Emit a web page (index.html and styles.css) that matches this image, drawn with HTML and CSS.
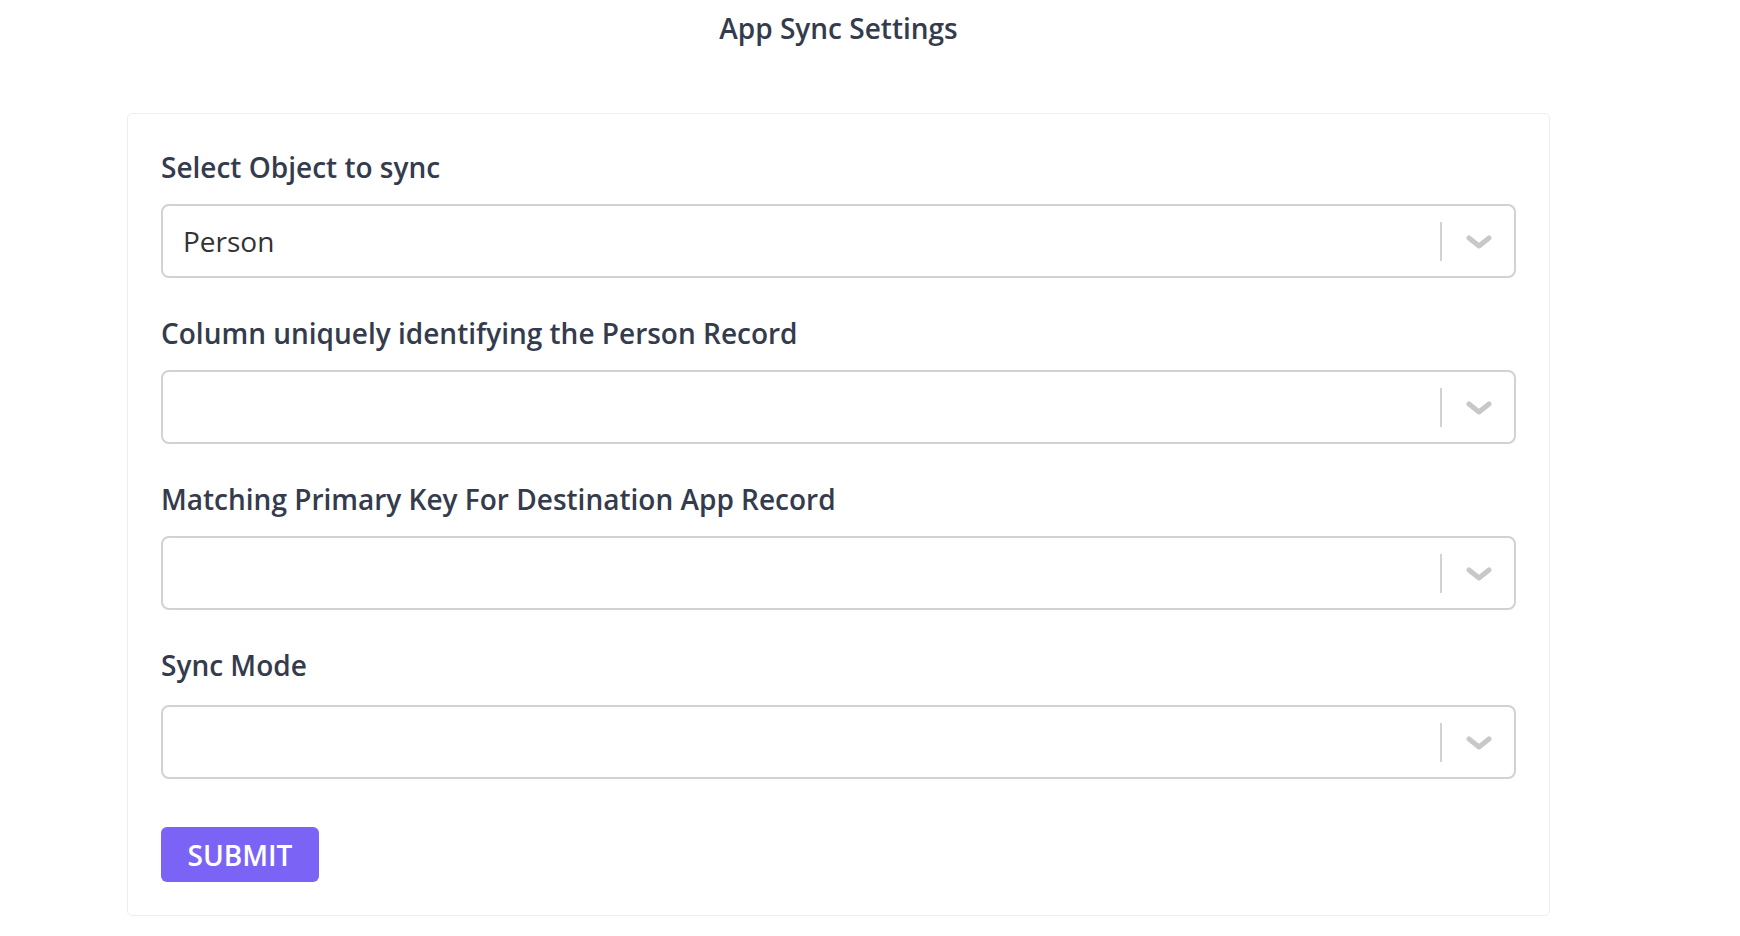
FILE: index.html
```html
<!DOCTYPE html>
<html lang="en">
<head>
<meta charset="utf-8">
<title>App Sync Settings</title>
<link rel="stylesheet" href="styles.css">
</head>
<body>
<div class="page">
  <h1 class="title">App Sync Settings</h1>
  <form class="card">
    <div class="field">
      <label class="label">Select Object to sync</label>
      <div class="select">
        <div class="value">Person</div>
        <div class="indicators">
          <span class="sep"></span>
          <span class="chev"><svg viewBox="0 0 26 14" width="26" height="14"><polyline points="3,3 13,11 23,3" fill="none" stroke="currentColor" stroke-width="5" stroke-linecap="round" stroke-linejoin="round"/></svg></span>
        </div>
      </div>
    </div>
    <div class="field">
      <label class="label">Column uniquely identifying the Person Record</label>
      <div class="select">
        <div class="value"></div>
        <div class="indicators">
          <span class="sep"></span>
          <span class="chev"><svg viewBox="0 0 26 14" width="26" height="14"><polyline points="3,3 13,11 23,3" fill="none" stroke="currentColor" stroke-width="5" stroke-linecap="round" stroke-linejoin="round"/></svg></span>
        </div>
      </div>
    </div>
    <div class="field">
      <label class="label">Matching Primary Key For Destination App Record</label>
      <div class="select">
        <div class="value"></div>
        <div class="indicators">
          <span class="sep"></span>
          <span class="chev"><svg viewBox="0 0 26 14" width="26" height="14"><polyline points="3,3 13,11 23,3" fill="none" stroke="currentColor" stroke-width="5" stroke-linecap="round" stroke-linejoin="round"/></svg></span>
        </div>
      </div>
    </div>
    <div class="field field-last">
      <label class="label">Sync Mode</label>
      <div class="select">
        <div class="value"></div>
        <div class="indicators">
          <span class="sep"></span>
          <span class="chev"><svg viewBox="0 0 26 14" width="26" height="14"><polyline points="3,3 13,11 23,3" fill="none" stroke="currentColor" stroke-width="5" stroke-linecap="round" stroke-linejoin="round"/></svg></span>
        </div>
      </div>
    </div>
    <div class="actions">
      <button type="button" class="submit">SUBMIT</button>
    </div>
  </form>
</div>
</body>
</html>
```
FILE: styles.css
```css
* { box-sizing: border-box; }
html, body { margin: 0; padding: 0; background: #ffffff; }
body { font-family: "Open Sans", "Liberation Sans", sans-serif; color: #343b4d; }
.page {
  width: 1423px;
  margin-left: 127px;
  padding-top: 10px;
}
.title {
  margin: 0;
  text-align: center;
  font-size: 28px;
  line-height: 36px;
  font-weight: 600;
  color: #343b4d;
}
.card {
  margin-top: 67px;
  border: 1px solid #eceef3;
  border-radius: 5px;
  padding: 33px 33px 33px 33px;
}
.field { margin-bottom: 35px; }
.field-last .label { margin-bottom: 20px; }
.field-last { margin-bottom: 32px; }
.label {
  display: block;
  font-size: 28px;
  line-height: 40px;
  font-weight: 600;
  color: #343b4d;
  margin-bottom: 17px;
}
.select {
  height: 74px;
  border: 2px solid #d2d2d2;
  border-radius: 8px;
  display: flex;
  align-items: center;
}
.value {
  flex: 1;
  padding-left: 20px;
  font-size: 28px;
  color: #333333;
}
.indicators {
  display: flex;
  align-items: center;
  height: 100%;
}
.sep {
  width: 2px;
  height: 39px;
  background: #d2d2d2;
}
.chev {
  display: flex;
  color: #c8c8c8;
  padding: 1px 22px 0 24px;
}
.actions { padding-top: 16px; }
.submit {
  width: 158px;
  height: 55px;
  border: 0;
  border-radius: 6px;
  background: #7b64f5;
  color: #ffffff;
  font-family: "Open Sans", "Liberation Sans", sans-serif;
  font-size: 28px;
  font-weight: 600;
  padding: 0;
}
```
